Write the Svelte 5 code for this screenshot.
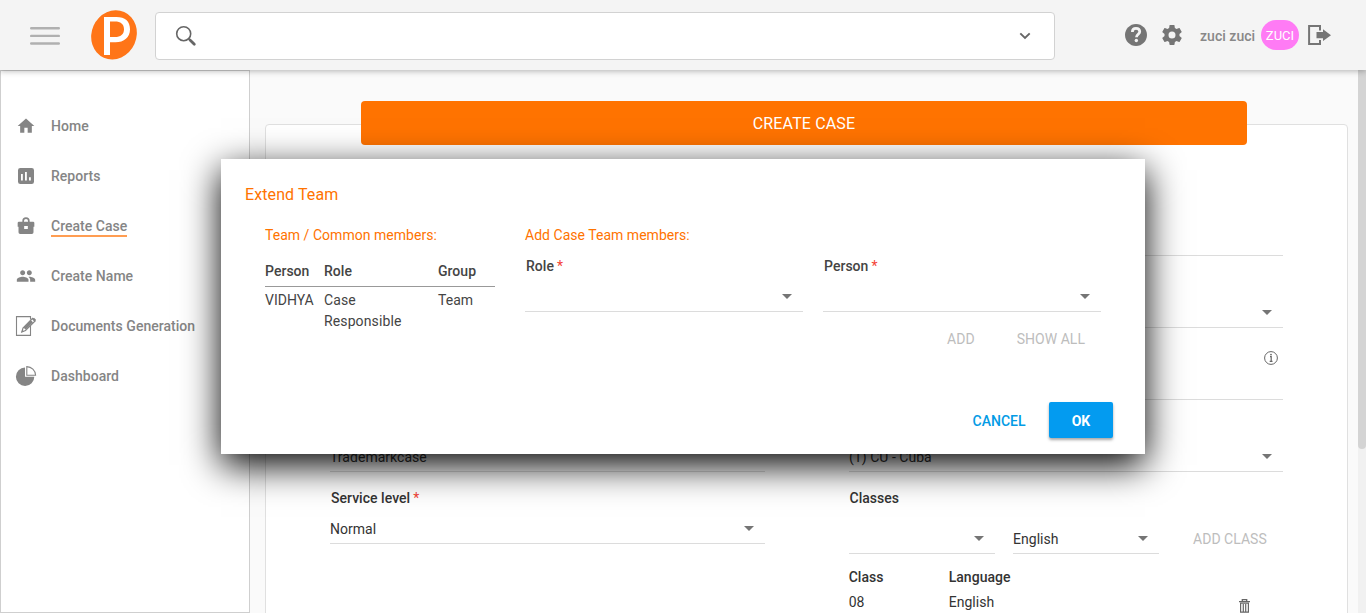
<script>
  const menu = [
    { icon: 'home', label: 'Home' },
    { icon: 'reports', label: 'Reports' },
    { icon: 'case', label: 'Create Case', active: true },
    { icon: 'people', label: 'Create Name' },
    { icon: 'doc', label: 'Documents Generation' },
    { icon: 'pie', label: 'Dashboard' }
  ];
  const leftFields = [
    { value: '' },
    { value: '' },
    { value: '' },
    { value: 'Trademarkcase' },
    { label: 'Service level', required: true, value: 'Normal', arrow: true }
  ];
  const rightFields = [
    { value: '' },
    { value: '', arrow: true },
    { value: '', info: true },
    { value: '(1) CU - Cuba', arrow: true }
  ];
  const teamFields = ['Role', 'Person'];
</script>

{#snippet caret()}
  <svg class="caret" width="10" height="5" viewBox="0 0 10 5"><path d="M0 0h10L5 5z" fill="#757575" /></svg>
{/snippet}

{#snippet field(f)}
  <div class="field">
    <div class="label">
      {#if f.label}{f.label}{#if f.required}<span class="req">*</span>{/if}{/if}
    </div>
    <div class="value">
      <span>{f.value}</span>
      {#if f.arrow}{@render caret()}{/if}
      {#if f.info}
        <svg class="info" width="14" height="14" viewBox="0 0 14 14">
          <circle cx="7" cy="7" r="6.4" fill="none" stroke="#666" stroke-width="1" />
          <path d="M6 5.700h1.200v4.500M5.700 10.300h2.800" fill="none" stroke="#666" stroke-width="1.200" />
          <circle cx="7" cy="3.600" r=".9" fill="#666" />
        </svg>
      {/if}
    </div>
  </div>
{/snippet}

<div class="app">
  <header>
    <svg class="burger" width="30" height="19" viewBox="0 0 30 19"><path d="M1.200 2.300h27.600M1.200 9.900h27.600M1.200 17.500h27.600" stroke="#b0b0b0" stroke-width="2.400" stroke-linecap="round" /></svg>
    <svg class="logo" width="48" height="50" viewBox="0 0 48 50">
      <ellipse cx="24" cy="24.800" rx="22.400" ry="25" transform="rotate(24 24 24.800)" fill="#ff7518" />
      <path fill-rule="evenodd" fill="#fff" d="M14 7h12.500c8.500 0 13.500 4.200 13.500 12.200C40 27.500 34 32.200 25.500 32.200H20V45h-6zM20 11.500v15.600h5c5.500 0 9-2.600 9-7.800 0-5.300-3.500-7.800-9-7.800z" />
    </svg>
    <div class="search">
      <svg width="22" height="22" viewBox="0 0 22 22">
        <circle cx="8.700" cy="8.700" r="7" fill="none" stroke="#666" stroke-width="1.600" />
        <path d="M13.600 13.600l1.500 1.500" stroke="#666" stroke-width="1.500" />
        <path d="M15 15l4.300 4.300" stroke="#666" stroke-width="2.800" stroke-linecap="round" />
      </svg>
      <svg class="chev" width="12" height="8" viewBox="0 0 12 8"><path d="M1.300 1.300L6 6l4.700-4.700" fill="none" stroke="#666" stroke-width="1.900" /></svg>
    </div>
    <div class="tools">
      <svg class="help" width="22" height="22" viewBox="2 2 20 20"><path fill="#757575" d="M12 2C6.480 2 2 6.480 2 12s4.480 10 10 10 10-4.480 10-10S17.520 2 12 2z" /><path d="M8.700 9.200C8.700 7.300 10 6 12 6s3.400 1.200 3.400 3c0 2.100-3 2.500-3 5" fill="none" stroke="#f4f4f4" stroke-width="2.500" /><circle cx="12.300" cy="17" r="1.550" fill="#f4f4f4" /></svg>
      <svg class="gear" width="24" height="24" viewBox="0 0 24 24"><path fill="#757575" d="M19.430 12.980c.04-.32.07-.64.07-.98s-.03-.66-.07-.98l2.110-1.650c.19-.15.24-.42.12-.64l-2-3.460c-.12-.22-.39-.3-.61-.22l-2.490 1c-.52-.4-1.080-.73-1.690-.98l-.38-2.650C14.460 2.180 14.250 2 14 2h-4c-.25 0-.46.18-.49.42l-.38 2.650c-.61.25-1.170.59-1.690.98l-2.490-1c-.23-.09-.49 0-.61.22l-2 3.460c-.13.22-.07.49.12.64l2.110 1.650c-.04.32-.07.65-.07.98s.03.66.07.98l-2.110 1.650c-.19.15-.24.42-.12.64l2 3.460c.12.22.39.3.61.22l2.490-1c.52.4 1.080.73 1.690.98l.38 2.650c.03.24.24.42.49.42h4c.25 0 .46-.18.49-.42l.38-2.650c.61-.25 1.170-.59 1.690-.98l2.490 1c.23.09.49 0 .61-.22l2-3.460c.12-.22.07-.49-.12-.64zM12 15.500A3.500 3.500 0 1 1 12 8.500a3.500 3.500 0 0 1 0 7z" /></svg>
      <span class="user">zuci zuci</span>
      <span class="avatar">ZUCI</span>
      <svg class="exit" width="24" height="22" viewBox="0 0 24 22"><path d="M13 6.500V2.100H2.100v17.800H13v-4" fill="none" stroke="#757575" stroke-width="2" /><path fill="#757575" d="M9.500 8H16V5.300L24 11.200 16 17v-2.700H9.500z" /></svg>
    </div>
  </header>

  <div class="body">
    <nav>
      {#each menu as m}
        <a class:active={m.active} href="#top">
          <span class="ico">
            {#if m.icon === 'home'}
              <svg width="20" height="20" viewBox="0 0 24 24"><path d="M10 20v-6h4v6h5v-8h3L12 3 2 12h3v8z" /></svg>
            {:else if m.icon === 'reports'}
              <svg width="20" height="20" viewBox="0 0 24 24"><path fill-rule="evenodd" d="M5.200 2.400h13.600a2.800 2.800 0 0 1 2.800 2.800v13.600a2.800 2.800 0 0 1-2.800 2.800H5.200a2.800 2.800 0 0 1-2.800-2.800V5.200a2.800 2.800 0 0 1 2.800-2.800zM6 9.600V17.500h2.200V9.600zM10.800 7.200V17.500h2.200V7.200zM15.600 13.500v4h2.200v-4z" /></svg>
            {:else if m.icon === 'case'}
              <svg width="20" height="20" viewBox="0 0 24 24"><path fill-rule="evenodd" d="M7.600 7V6a4.400 4.400 0 0 1 8.800 0v1H20.500a1.500 1.500 0 0 1 1.500 1.500v4.500h-1v6.500a2 2 0 0 1-2 2H5a2 2 0 0 1-2-2V13H2V8.500A1.500 1.500 0 0 1 3.500 7zM9.600 7h4.800V6a2.400 2.400 0 0 0-4.800 0zM9.800 12v3.600h4.400V12z" /></svg>
            {:else if m.icon === 'people'}
              <svg width="20" height="20" viewBox="0 0 24 24"><path d="M16 11c1.660 0 2.990-1.340 2.990-3S17.660 5 16 5s-3 1.340-3 3 1.340 3 3 3zm-8 0c1.660 0 2.990-1.340 2.990-3S9.660 5 8 5 5 6.340 5 8s1.340 3 3 3zm0 2c-2.330 0-7 1.170-7 3.500V19h14v-2.500c0-2.330-4.670-3.500-7-3.500zm8 0c-.29 0-.62.020-.970.050 1.160.84 1.970 1.970 1.970 3.450V19h6v-2.500c0-2.330-4.670-3.500-7-3.500z" /></svg>
            {:else if m.icon === 'doc'}
              <svg width="22" height="20" viewBox="0 0 22 20"><path d="M15.500 3.500V.6H1.500v18.800h14V9.500" fill="none" stroke="#858585" stroke-width="1.100" /><path d="M17.500 2.300l2.600 2.600L10.500 14.600l-3.700 1.400 1.200-4z" fill="#fff" stroke="#858585" stroke-width="1.200" /><path d="M16.500 4.700l-7.300 7.500M17.500 5.800l-7.300 7.500" stroke="#858585" stroke-width="1.600" /><path d="M17 3l2-1.300 2 2L19.600 6zM6.500 16.300l.8-2.500 1.800 1.700z" /></svg>
            {:else}
              <svg width="22" height="20" viewBox="0 0 22 20"><path d="M10 1.500V10.700h9.300A9.200 9.200 0 1 1 10 1.500z" /><path d="M11.800.6a9 9 0 0 1 8.800 8.600h-8.800z" fill="none" stroke="#858585" stroke-width="1.100" /></svg>
            {/if}
          </span>
          <span class="txt">{m.label}</span>
        </a>
      {/each}
    </nav>

    <main>
      <div class="card">
        <div class="col">
          {#each leftFields as f}{@render field(f)}{/each}
        </div>
        <div class="col">
          {#each rightFields as f}{@render field(f)}{/each}
          <div class="classes">
            <div class="label">Classes</div>
            <div class="pick">
              <div class="value"><span></span>{@render caret()}</div>
              <div class="value"><span>English</span>{@render caret()}</div>
              <span class="flat">ADD CLASS</span>
            </div>
            <div class="list">
              <b>Class</b><b>Language</b><i></i>
              <span>08</span><span>English</span>
              <svg width="11" height="14" viewBox="0 0 11 14"><path d="M3.300 2V.7h4.400V2M0 2.600h11" fill="none" stroke="#666" stroke-width="1.300" /><path d="M1.600 4.200v9h7.800v-9zM4.300 5v7.500M6.700 5v7.500" fill="none" stroke="#666" stroke-width="1.200" /></svg>
            </div>
          </div>
        </div>
        <div class="banner">CREATE CASE</div>
      </div>
      <div class="scroll"><div></div></div>
    </main>
  </div>

  <div class="modal">
    <h2>Extend Team</h2>
    <div class="cols">
      <section class="team">
        <h3>Team / Common members:</h3>
        <div class="trow head"><b>Person</b><b>Role</b><b>Group</b></div>
        <div class="trow"><span>VIDHYA</span><span>Case Responsible</span><span>Team</span></div>
      </section>
      <section class="add">
        <h3>Add Case Team members:</h3>
        <div class="pair">
          {#each teamFields as t}
            <div class="mfield">
              <div class="label">{t}<span class="req">*</span></div>
              <div class="value"><span></span>{@render caret()}</div>
            </div>
          {/each}
        </div>
        <div class="acts"><span>ADD</span><span>SHOW ALL</span></div>
      </section>
    </div>
    <div class="foot"><span class="cancel">CANCEL</span><button>OK</button></div>
  </div>
</div>

<style>
  .app, .app * { box-sizing: border-box; }
  .app { position: relative; width: 1366px; height: 613px; overflow: hidden; display: flex; flex-direction: column; background: #fafafa; font: 14px/21px Roboto, "Liberation Sans", sans-serif; letter-spacing: .03px; color: #333; }
  svg { display: block; flex: none; }
  header { position: relative; z-index: 2; height: 70px; flex: none; background: #f4f4f4; box-shadow: 0 1px 6px rgba(0,0,0,.3); display: flex; align-items: center; padding-left: 30px; }
  .burger { margin-right: 30px; }
  .logo { margin-right: 17px; }
  .search { width: 900px; height: 48px; margin-top: 2px; background: #fff; border: 1px solid #d2d2d2; border-radius: 4px; display: flex; align-items: center; justify-content: space-between; padding: 0 23px 0 19px; }
  .tools { display: flex; align-items: center; margin-left: 70px; }
  .help { margin-top: -1px; }
  .gear { margin-left: 13px; }
  .user { margin: 2px 5px 0 16px; font-weight: 500; color: #888; width: 56px; white-space: nowrap; }
  .avatar { width: 38px; height: 30px; border-radius: 15px; background: #ff7bf5; color: #fff; font-size: 13px; line-height: 31px; text-align: center; }
  .exit { margin-left: 8px; }
  .body { flex: 1; display: flex; min-height: 0; }
  nav { width: 250px; flex: none; background: #fff; border: 1px solid #cfcfcf; display: flex; flex-direction: column; padding: 30px 0 0 14px; }
  nav a { height: 50px; display: flex; align-items: center; text-decoration: none; color: #858585; font-weight: 500; }
  .ico { width: 22px; display: flex; justify-content: center; margin-right: 14px; }
  .ico svg { fill: #858585; }
  .txt { border-bottom: 2px solid transparent; line-height: 20px; height: 21px; margin-top: 1px; white-space: nowrap; }
  .active .txt { border-color: #ff9d52; }
  main { flex: 1; display: flex; justify-content: space-between; padding-left: 15px; }
  .card { position: relative; width: 1083px; margin-top: 54px; height: 520px; background: #fff; border: 1px solid #e0e0e0; border-radius: 4px; padding: 59px 64px 0; display: flex; justify-content: space-between; }
  .banner { position: absolute; left: 95px; top: -24px; width: 886px; height: 44px; border-radius: 4px; background: #ff7300; color: #fff; font-size: 16px; letter-spacing: .15px; line-height: 46px; text-align: center; }
  .col { width: 435px; }
  .col + .col { width: 434px; }
  .field { height: 72px; display: flex; flex-direction: column; justify-content: space-between; padding-top: 16px; border-bottom: 1px solid #dcdcdc; }
  .label { height: 21px; font-weight: 500; padding-left: 1px; white-space: nowrap; }
  .req { color: #f44336; margin-left: 3px; font-weight: 400; }
  .value { display: flex; justify-content: space-between; padding-right: 11px; }
  .field .value { height: 24px; }
  .field .caret { margin-top: 7px; }
  .caret { margin-top: 7px; }
  .info { margin: -24px -6px 0 0; }
  .classes { padding-top: 16px; }
  .classes .label { padding-left: .5px; }
  .pick { display: flex; padding-top: 20px; }
  .pick .value { width: 146px; height: 25px; border-bottom: 1px solid #dcdcdc; margin-right: 18px; }
  .flat { color: #bdbdbd; margin-left: 16px; white-space: nowrap; }
  .list { display: grid; grid-template-columns: 100px 290px auto; padding-top: 13px; row-gap: 4px; justify-content: start; margin-left: -.3px; }
  .list b, .trow b { font-weight: 500; }
  .list svg { margin-top: 7px; }
  .scroll { width: 8px; background: #f1f1f1; }
  .scroll div { height: 379px; background: #d4d4d4; border-radius: 0 0 4px 4px; }
  .modal { position: absolute; z-index: 3; left: 221px; top: 159px; width: 924px; height: 295px; background: #fff; box-shadow: 0 11px 35px #000; padding: 25px 24px 0; display: flex; flex-direction: column; color: #444; }
  h2, h3 { margin: 0; font-weight: 400; color: #ff7300; }
  h2 { font-size: 16px; line-height: 22px; letter-spacing: .1px; }
  h3 { font-size: 14px; line-height: 21px; }
  .cols { display: flex; padding: 19px 0 0 20px; }
  .team { width: 230px; margin-right: 30px; }
  .trow { display: grid; grid-template-columns: 59px 114px 57px; padding-top: 3px; }
  .head { padding: 15px 0 4px; border-bottom: 1px solid #999; }
  .trow span:nth-child(2) { width: 90px; letter-spacing: .12px; }
  .add { width: 576px; }
  .pair { display: flex; justify-content: space-between; padding-top: 10px; }
  .mfield { width: 278px; height: 56px; border-bottom: 1px solid #dcdcdc; display: flex; flex-direction: column; justify-content: space-between; }
  .mfield .value { height: 25px; }
  .mfield .caret { margin-top: 8px; }
  .acts { display: flex; justify-content: flex-end; gap: 42px; padding: 17px 16px 0 0; color: #bdbdbd; }
  .foot { display: flex; justify-content: flex-end; align-items: center; gap: 23.500px; padding-right: 8px; margin-top: auto; margin-bottom: 16px; font-weight: 500; }
  .cancel { color: #039be5; margin-top: 2px; letter-spacing: 0; }
  button { width: 64px; height: 36px; border: 0; border-radius: 2px; background: #039bf0; color: #fff; font: 700 14px/38px Roboto, sans-serif; padding: 0; box-shadow: 0 2px 3px rgba(0,0,0,.35); }
</style>
